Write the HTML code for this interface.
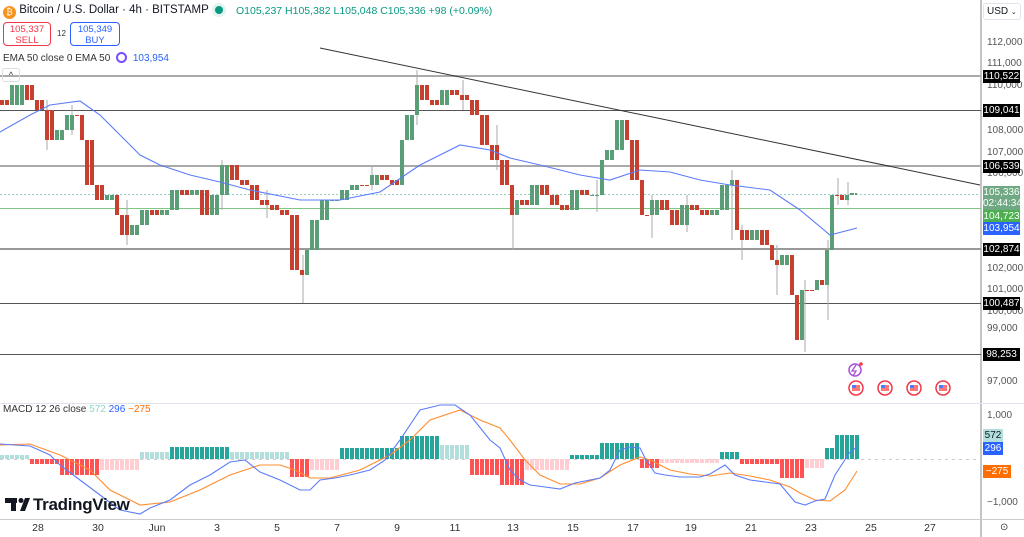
<!DOCTYPE html>
<html><head><meta charset="utf-8">
<style>
*{margin:0;padding:0;box-sizing:border-box}
body{width:1024px;height:537px;overflow:hidden;background:#fff;font-family:"Liberation Sans",sans-serif;position:relative}
.abs{position:absolute}
.t{font-size:11px;color:#131722;white-space:nowrap}
.lbl{position:absolute;left:983px;width:37px;height:13px;font-size:10px;line-height:13px;text-align:center;color:#fff;background:#000}
.ax{position:absolute;left:987px;font-size:10px;color:#555}
.dt{position:absolute;top:522px;font-size:10.5px;color:#333;transform:translateX(-50%)}
</style></head><body>
<svg class="abs" style="left:0;top:0" width="1024" height="537">
<defs>
<pattern id="pg" patternUnits="userSpaceOnUse" width="5" height="10"><rect x="0" y="0" width="4" height="10" fill="#5a9e78"/></pattern>
<pattern id="pr" patternUnits="userSpaceOnUse" width="5" height="10"><rect x="0" y="0" width="4" height="10" fill="#c7402f"/></pattern>
<pattern id="ht" patternUnits="userSpaceOnUse" width="5" height="10"><rect width="4" height="10" fill="#26a69a"/></pattern>
<pattern id="hl" patternUnits="userSpaceOnUse" width="5" height="10"><rect width="4" height="10" fill="#b2dfdb"/></pattern>
<pattern id="hr" patternUnits="userSpaceOnUse" width="5" height="10"><rect width="4" height="10" fill="#ff5252"/></pattern>
<pattern id="hp" patternUnits="userSpaceOnUse" width="5" height="10"><rect width="4" height="10" fill="#ffcdd2"/></pattern>
</defs>
<line x1="981" y1="0" x2="981" y2="537" stroke="#888"/>
<line x1="0" y1="403.5" x2="1024" y2="403.5" stroke="#e0e3eb"/>
<line x1="0" y1="519.5" x2="1024" y2="519.5" stroke="#ccc"/>
<g stroke-width="1">
<line x1="0" y1="76" x2="981" y2="76" stroke="#aaa" stroke-width="2"/>
<line x1="0" y1="110.5" x2="981" y2="110.5" stroke="#555"/>
<line x1="0" y1="166" x2="981" y2="166" stroke="#aaa" stroke-width="2"/>
<line x1="0" y1="249" x2="981" y2="249" stroke="#999" stroke-width="2"/>
<line x1="0" y1="303.5" x2="981" y2="303.5" stroke="#555"/>
<line x1="0" y1="354.5" x2="981" y2="354.5" stroke="#555"/>
<line x1="0" y1="208.5" x2="981" y2="208.5" stroke="#81c784"/>
<line x1="0" y1="194.5" x2="981" y2="194.5" stroke="#9cc" stroke-dasharray="2,2"/>
<line x1="320" y1="48" x2="980" y2="185" stroke="#333"/>
</g>
<g stroke="#aaa">
<line x1="303" y1="255" x2="303" y2="303"/><line x1="513" y1="200" x2="513" y2="250"/><line x1="805" y1="280" x2="805" y2="352"/><line x1="828" y1="240" x2="828" y2="320"/><line x1="47" y1="100" x2="47" y2="150"/><line x1="732" y1="170" x2="732" y2="240"/><line x1="652" y1="195" x2="652" y2="238"/><line x1="417" y1="70" x2="417" y2="125"/><line x1="463" y1="80" x2="463" y2="110"/>
<line x1="72" y1="105" x2="72" y2="135"/><line x1="127" y1="200" x2="127" y2="245"/><line x1="222" y1="160" x2="222" y2="210"/><line x1="267" y1="190" x2="267" y2="218"/><line x1="372" y1="165" x2="372" y2="190"/><line x1="497" y1="125" x2="497" y2="170"/><line x1="597" y1="180" x2="597" y2="212"/><line x1="742" y1="225" x2="742" y2="260"/><line x1="777" y1="245" x2="777" y2="295"/><line x1="838" y1="178" x2="838" y2="205"/><line x1="848" y1="182" x2="848" y2="205"/><line x1="687" y1="195" x2="687" y2="232"/>
</g>
<g>
<rect x="0" y="100" width="9" height="5" fill="url(#pr)"/>
<rect x="10" y="85" width="14" height="20" fill="url(#pg)"/>
<rect x="25" y="85" width="9" height="15" fill="url(#pr)"/>
<rect x="35" y="100" width="9" height="10" fill="url(#pr)"/>
<rect x="45" y="110" width="9" height="30" fill="url(#pr)"/>
<rect x="55" y="130" width="9" height="10" fill="url(#pg)"/>
<rect x="65" y="115" width="9" height="15" fill="url(#pg)"/>
<rect x="75" y="115" width="4" height="1" fill="url(#pr)"/>
<rect x="80" y="115" width="4" height="25" fill="url(#pr)"/>
<rect x="85" y="140" width="9" height="45" fill="url(#pr)"/>
<rect x="95" y="185" width="9" height="15" fill="url(#pr)"/>
<rect x="105" y="195" width="9" height="5" fill="url(#pg)"/>
<rect x="115" y="195" width="4" height="20" fill="url(#pr)"/>
<rect x="120" y="215" width="9" height="20" fill="url(#pr)"/>
<rect x="130" y="225" width="9" height="10" fill="url(#pg)"/>
<rect x="140" y="210" width="9" height="15" fill="url(#pg)"/>
<rect x="150" y="210" width="9" height="5" fill="url(#pr)"/>
<rect x="160" y="210" width="9" height="5" fill="url(#pg)"/>
<rect x="170" y="190" width="9" height="20" fill="url(#pg)"/>
<rect x="180" y="190" width="9" height="5" fill="url(#pr)"/>
<rect x="190" y="190" width="9" height="5" fill="url(#pg)"/>
<rect x="200" y="190" width="9" height="25" fill="url(#pr)"/>
<rect x="210" y="195" width="9" height="20" fill="url(#pg)"/>
<rect x="220" y="165" width="9" height="30" fill="url(#pg)"/>
<rect x="230" y="165" width="9" height="15" fill="url(#pr)"/>
<rect x="240" y="180" width="9" height="5" fill="url(#pr)"/>
<rect x="250" y="185" width="9" height="15" fill="url(#pr)"/>
<rect x="260" y="200" width="9" height="5" fill="url(#pr)"/>
<rect x="270" y="205" width="9" height="5" fill="url(#pr)"/>
<rect x="280" y="210" width="9" height="5" fill="url(#pr)"/>
<rect x="290" y="215" width="9" height="55" fill="url(#pr)"/>
<rect x="300" y="270" width="4" height="5" fill="url(#pr)"/>
<rect x="305" y="250" width="4" height="25" fill="url(#pg)"/>
<rect x="310" y="220" width="9" height="30" fill="url(#pg)"/>
<rect x="320" y="200" width="9" height="20" fill="url(#pg)"/>
<rect x="330" y="200" width="9" height="1" fill="url(#pg)"/>
<rect x="340" y="190" width="9" height="10" fill="url(#pg)"/>
<rect x="350" y="185" width="9" height="5" fill="url(#pg)"/>
<rect x="360" y="185" width="9" height="1" fill="url(#pr)"/>
<rect x="370" y="175" width="9" height="10" fill="url(#pg)"/>
<rect x="380" y="175" width="9" height="5" fill="url(#pr)"/>
<rect x="390" y="180" width="9" height="5" fill="url(#pr)"/>
<rect x="400" y="140" width="4" height="45" fill="url(#pg)"/>
<rect x="405" y="115" width="9" height="25" fill="url(#pg)"/>
<rect x="415" y="85" width="4" height="30" fill="url(#pg)"/>
<rect x="420" y="85" width="9" height="15" fill="url(#pr)"/>
<rect x="430" y="100" width="9" height="5" fill="url(#pr)"/>
<rect x="440" y="90" width="9" height="15" fill="url(#pg)"/>
<rect x="450" y="90" width="9" height="5" fill="url(#pr)"/>
<rect x="460" y="95" width="9" height="5" fill="url(#pr)"/>
<rect x="470" y="100" width="9" height="15" fill="url(#pr)"/>
<rect x="480" y="115" width="9" height="30" fill="url(#pr)"/>
<rect x="490" y="145" width="9" height="15" fill="url(#pr)"/>
<rect x="500" y="160" width="9" height="25" fill="url(#pr)"/>
<rect x="510" y="185" width="4" height="30" fill="url(#pr)"/>
<rect x="515" y="200" width="4" height="15" fill="url(#pg)"/>
<rect x="520" y="200" width="9" height="5" fill="url(#pr)"/>
<rect x="530" y="185" width="9" height="20" fill="url(#pg)"/>
<rect x="540" y="185" width="9" height="10" fill="url(#pr)"/>
<rect x="550" y="195" width="9" height="10" fill="url(#pr)"/>
<rect x="560" y="205" width="9" height="5" fill="url(#pr)"/>
<rect x="570" y="190" width="9" height="20" fill="url(#pg)"/>
<rect x="580" y="190" width="9" height="5" fill="url(#pr)"/>
<rect x="590" y="195" width="9" height="1" fill="url(#pg)"/>
<rect x="600" y="160" width="4" height="35" fill="url(#pg)"/>
<rect x="605" y="150" width="9" height="10" fill="url(#pg)"/>
<rect x="615" y="120" width="9" height="30" fill="url(#pg)"/>
<rect x="625" y="120" width="4" height="20" fill="url(#pr)"/>
<rect x="630" y="140" width="9" height="40" fill="url(#pr)"/>
<rect x="640" y="180" width="4" height="35" fill="url(#pr)"/>
<rect x="645" y="215" width="4" height="1" fill="url(#pr)"/>
<rect x="650" y="200" width="9" height="15" fill="url(#pg)"/>
<rect x="660" y="200" width="9" height="10" fill="url(#pr)"/>
<rect x="670" y="210" width="9" height="15" fill="url(#pr)"/>
<rect x="680" y="205" width="9" height="20" fill="url(#pg)"/>
<rect x="690" y="205" width="9" height="5" fill="url(#pr)"/>
<rect x="700" y="210" width="9" height="5" fill="url(#pr)"/>
<rect x="710" y="210" width="9" height="5" fill="url(#pg)"/>
<rect x="720" y="185" width="9" height="25" fill="url(#pg)"/>
<rect x="730" y="180" width="4" height="5" fill="url(#pg)"/>
<rect x="735" y="180" width="4" height="50" fill="url(#pr)"/>
<rect x="740" y="230" width="9" height="10" fill="url(#pr)"/>
<rect x="750" y="230" width="9" height="10" fill="url(#pg)"/>
<rect x="760" y="230" width="9" height="15" fill="url(#pr)"/>
<rect x="770" y="245" width="4" height="15" fill="url(#pr)"/>
<rect x="775" y="260" width="4" height="5" fill="url(#pr)"/>
<rect x="780" y="255" width="9" height="10" fill="url(#pg)"/>
<rect x="790" y="255" width="4" height="40" fill="url(#pr)"/>
<rect x="795" y="295" width="4" height="45" fill="url(#pr)"/>
<rect x="800" y="290" width="4" height="50" fill="url(#pg)"/>
<rect x="805" y="290" width="9" height="1" fill="url(#pr)"/>
<rect x="815" y="280" width="4" height="10" fill="url(#pg)"/>
<rect x="820" y="280" width="4" height="5" fill="url(#pr)"/>
<rect x="825" y="250" width="4" height="35" fill="url(#pg)"/>
<rect x="830" y="195" width="4" height="55" fill="url(#pg)"/>
<rect x="835" y="195" width="9" height="1" fill="url(#pr)"/>
<rect x="840" y="195" width="4" height="5" fill="url(#pr)"/>
<rect x="845" y="195" width="4" height="5" fill="url(#pg)"/>
<rect x="850" y="193" width="7" height="2" fill="url(#pg)"/>
</g>
<polyline fill="none" stroke="#5b7cfa" stroke-width="1.1" points="0,132 30,115 50,105 80,101 100,115 120,135 140,155 160,165 190,175 220,182 250,190 300,200 340,200 380,192 420,165 460,145 490,150 510,158 540,165 580,175 610,180 640,170 670,172 700,180 730,185 770,190 800,210 830,235 857,228"/>
<line x1="0" y1="459.5" x2="981" y2="459.5" stroke="#ccc" stroke-dasharray="3,4"/>
<g>
<rect x="0" y="455" width="30" height="4" fill="url(#hl)"/>
<rect x="30" y="459" width="30" height="5" fill="url(#hr)"/>
<rect x="60" y="459" width="40" height="16" fill="url(#hr)"/>
<rect x="100" y="459" width="40" height="11" fill="url(#hp)"/>
<rect x="140" y="452" width="30" height="7" fill="url(#hl)"/>
<rect x="170" y="447" width="60" height="12" fill="url(#ht)"/>
<rect x="230" y="452" width="60" height="7" fill="url(#hl)"/>
<rect x="290" y="459" width="20" height="18" fill="url(#hr)"/>
<rect x="310" y="459" width="30" height="11" fill="url(#hp)"/>
<rect x="340" y="448" width="60" height="11" fill="url(#ht)"/>
<rect x="400" y="436" width="40" height="23" fill="url(#ht)"/>
<rect x="440" y="445" width="30" height="14" fill="url(#hl)"/>
<rect x="470" y="459" width="30" height="16" fill="url(#hr)"/>
<rect x="500" y="459" width="25" height="26" fill="url(#hr)"/>
<rect x="525" y="459" width="45" height="11" fill="url(#hp)"/>
<rect x="570" y="455" width="30" height="4" fill="url(#ht)"/>
<rect x="600" y="443" width="40" height="16" fill="url(#ht)"/>
<rect x="640" y="459" width="20" height="9" fill="url(#hr)"/>
<rect x="660" y="459" width="60" height="4" fill="url(#hp)"/>
<rect x="720" y="452" width="20" height="7" fill="url(#ht)"/>
<rect x="740" y="459" width="40" height="5" fill="url(#hr)"/>
<rect x="780" y="459" width="25" height="19" fill="url(#hr)"/>
<rect x="805" y="459" width="20" height="9" fill="url(#hp)"/>
<rect x="825" y="448" width="10" height="11" fill="url(#ht)"/>
<rect x="835" y="435" width="24" height="24" fill="url(#ht)"/>
</g>
<polyline fill="none" stroke="#ff8c2e" stroke-width="1.1" points="0,445 30,444 60,455 90,470 110,490 140,505 170,502 200,490 230,475 260,465 280,465 295,470 310,478 330,478 360,470 390,455 410,440 430,420 460,410 480,420 500,428 510,440 525,460 540,475 560,484 580,484 600,478 620,465 640,457 650,460 670,470 690,474 710,476 730,473 750,476 770,480 790,487 800,493 815,500 830,501 845,490 857,471"/>
<polyline fill="none" stroke="#5b7cfa" stroke-width="1.1" points="0,444 30,446 50,455 60,465 80,480 100,495 120,510 140,514 150,508 170,500 190,485 210,475 230,462 245,460 260,472 280,480 300,490 310,490 320,480 335,478 350,475 370,470 385,460 400,440 420,410 440,405 455,405 470,415 490,440 500,448 510,470 520,480 530,485 545,487 560,489 575,483 590,480 600,478 610,470 620,450 630,447 640,448 645,458 655,473 665,475 680,477 700,477 710,474 725,465 735,475 750,480 765,482 780,484 795,502 805,505 815,501 825,499 835,475 850,452 857,447"/>
<circle cx="855" cy="370" r="6" fill="none" stroke="#a64fd8" stroke-width="1.5"/><path d="M856,365 L852,371 L856,371 L853,376" fill="none" stroke="#a64fd8" stroke-width="1.3"/><circle cx="861" cy="364" r="1.8" fill="#f23645"/>
<g stroke="#f23645" stroke-width="1.5"><circle cx="856" cy="388" r="7" fill="#fff"/><circle cx="885" cy="388" r="7" fill="#fff"/><circle cx="914" cy="388" r="7" fill="#fff"/><circle cx="943" cy="388" r="7" fill="#fff"/></g>
<g><rect x="852" y="385" width="8" height="6" fill="#f77"/><rect x="852" y="385" width="4" height="3" fill="#4a7cff"/><rect x="881" y="385" width="8" height="6" fill="#f77"/><rect x="881" y="385" width="4" height="3" fill="#4a7cff"/><rect x="910" y="385" width="8" height="6" fill="#f77"/><rect x="910" y="385" width="4" height="3" fill="#4a7cff"/><rect x="939" y="385" width="8" height="6" fill="#f77"/><rect x="939" y="385" width="4" height="3" fill="#4a7cff"/></g>
<g fill="#131722"><rect x="5" y="498" width="12" height="5"/><rect x="11" y="498" width="5" height="13"/><circle cx="21" cy="500.5" r="2.5"/><path d="M25,498 L30,498 L25,511 L20,511 Z"/></g>
</svg>

<div class="abs t" style="left:3px;top:4px;font-size:11.5px"><span style="display:inline-block;width:13px;height:13px;border-radius:50%;background:#f7931a;vertical-align:-2px;color:#fff;font-size:9px;text-align:center;line-height:13px">₿</span> Bitcoin / U.S. Dollar · 4h · BITSTAMP</div>
<div class="abs" style="left:215px;top:6px;width:8px;height:8px;border-radius:50%;background:#089981;box-shadow:0 0 0 3px #e3f3ef"></div>
<div class="abs t" style="left:236px;top:5px;font-size:10.5px;color:#089981">O105,237 H105,382 L105,048 C105,336 +98 (+0.09%)</div>
<div class="abs" style="left:3px;top:22px;width:48px;height:24px;border:1px solid #f23645;border-radius:4px;color:#f23645;font-size:9.5px;text-align:center;line-height:11px;padding-top:1px">105,337<br>SELL</div>
<div class="abs" style="left:57px;top:29px;font-size:8px;color:#333">12</div>
<div class="abs" style="left:70px;top:22px;width:50px;height:24px;border:1px solid #2962ff;border-radius:4px;color:#2962ff;font-size:9.5px;text-align:center;line-height:11px;padding-top:1px">105,349<br>BUY</div>
<div class="abs t" style="left:3px;top:52px;font-size:10px;color:#333">EMA 50 close 0 EMA 50 <span style="display:inline-block;width:11px;height:11px;border:2px solid #7b4cff;border-radius:50%;vertical-align:-2px;margin:0 3px"></span> <span style="color:#2962ff">103,954</span></div>
<div class="abs" style="left:2px;top:68px;width:18px;height:14px;border:1px solid #ddd;border-radius:3px;font-size:9px;text-align:center;line-height:12px;color:#333">^</div>
<div class="abs t" style="left:3px;top:404px;font-size:10px;color:#333">MACD 12 26 close <span style="color:#8fd3cc">572</span> <span style="color:#2962ff">296</span> <span style="color:#ff6d00">−275</span></div>
<div class="abs" style="left:33px;top:495px;font-size:17px;font-weight:bold;color:#131722;letter-spacing:-0.3px">TradingView</div>

<div class="abs" style="left:983px;top:3px;width:38px;height:17px;border:1px solid #e0e3eb;border-radius:3px;font-size:10px;line-height:15px;padding-left:3px;color:#131722">USD <span style="font-size:7px">⌄</span></div>
<div class="ax" style="top:37px">112,000</div>
<div class="ax" style="top:58px">111,000</div>
<div class="ax" style="top:80px">110,000</div>
<div class="ax" style="top:125px">108,000</div>
<div class="ax" style="top:147px">107,000</div>
<div class="ax" style="top:168px">106,000</div>
<div class="ax" style="top:263px">102,000</div>
<div class="ax" style="top:284px">101,000</div>
<div class="ax" style="top:306px">100,000</div>
<div class="ax" style="top:323px">99,000</div>
<div class="ax" style="top:376px">97,000</div>
<div class="ax" style="top:410px">1,000</div>
<div class="ax" style="top:466px">0</div>
<div class="ax" style="top:497px">−1,000</div>
<div class="lbl" style="top:70px">110,522</div>
<div class="lbl" style="top:104px">109,041</div>
<div class="lbl" style="top:160px">106,539</div>
<div class="lbl" style="top:186px;height:24px;background:#6fa882;line-height:11px;padding-top:1px">105,336<br>02:44:34</div>
<div class="lbl" style="top:210px;background:#4caf50">104,723</div>
<div class="lbl" style="top:222px;background:#2962ff">103,954</div>
<div class="lbl" style="top:243px">102,874</div>
<div class="lbl" style="top:297px">100,487</div>
<div class="lbl" style="top:348px">98,253</div>
<div class="lbl" style="top:429px;background:#b2dfdb;color:#131722;width:20px">572</div>
<div class="lbl" style="top:442px;background:#2962ff;width:20px">296</div>
<div class="lbl" style="top:465px;background:#ff6d00;width:28px">−275</div>
<div class="abs" style="left:1000px;top:522px;font-size:10px;color:#333">⊙</div>

<div class="dt" style="left:38px">28</div><div class="dt" style="left:98px">30</div><div class="dt" style="left:157px">Jun</div><div class="dt" style="left:217px">3</div><div class="dt" style="left:277px">5</div><div class="dt" style="left:337px">7</div><div class="dt" style="left:397px">9</div><div class="dt" style="left:455px">11</div><div class="dt" style="left:513px">13</div><div class="dt" style="left:573px">15</div><div class="dt" style="left:633px">17</div><div class="dt" style="left:691px">19</div><div class="dt" style="left:751px">21</div><div class="dt" style="left:811px">23</div><div class="dt" style="left:871px">25</div><div class="dt" style="left:930px">27</div>
</body></html>
